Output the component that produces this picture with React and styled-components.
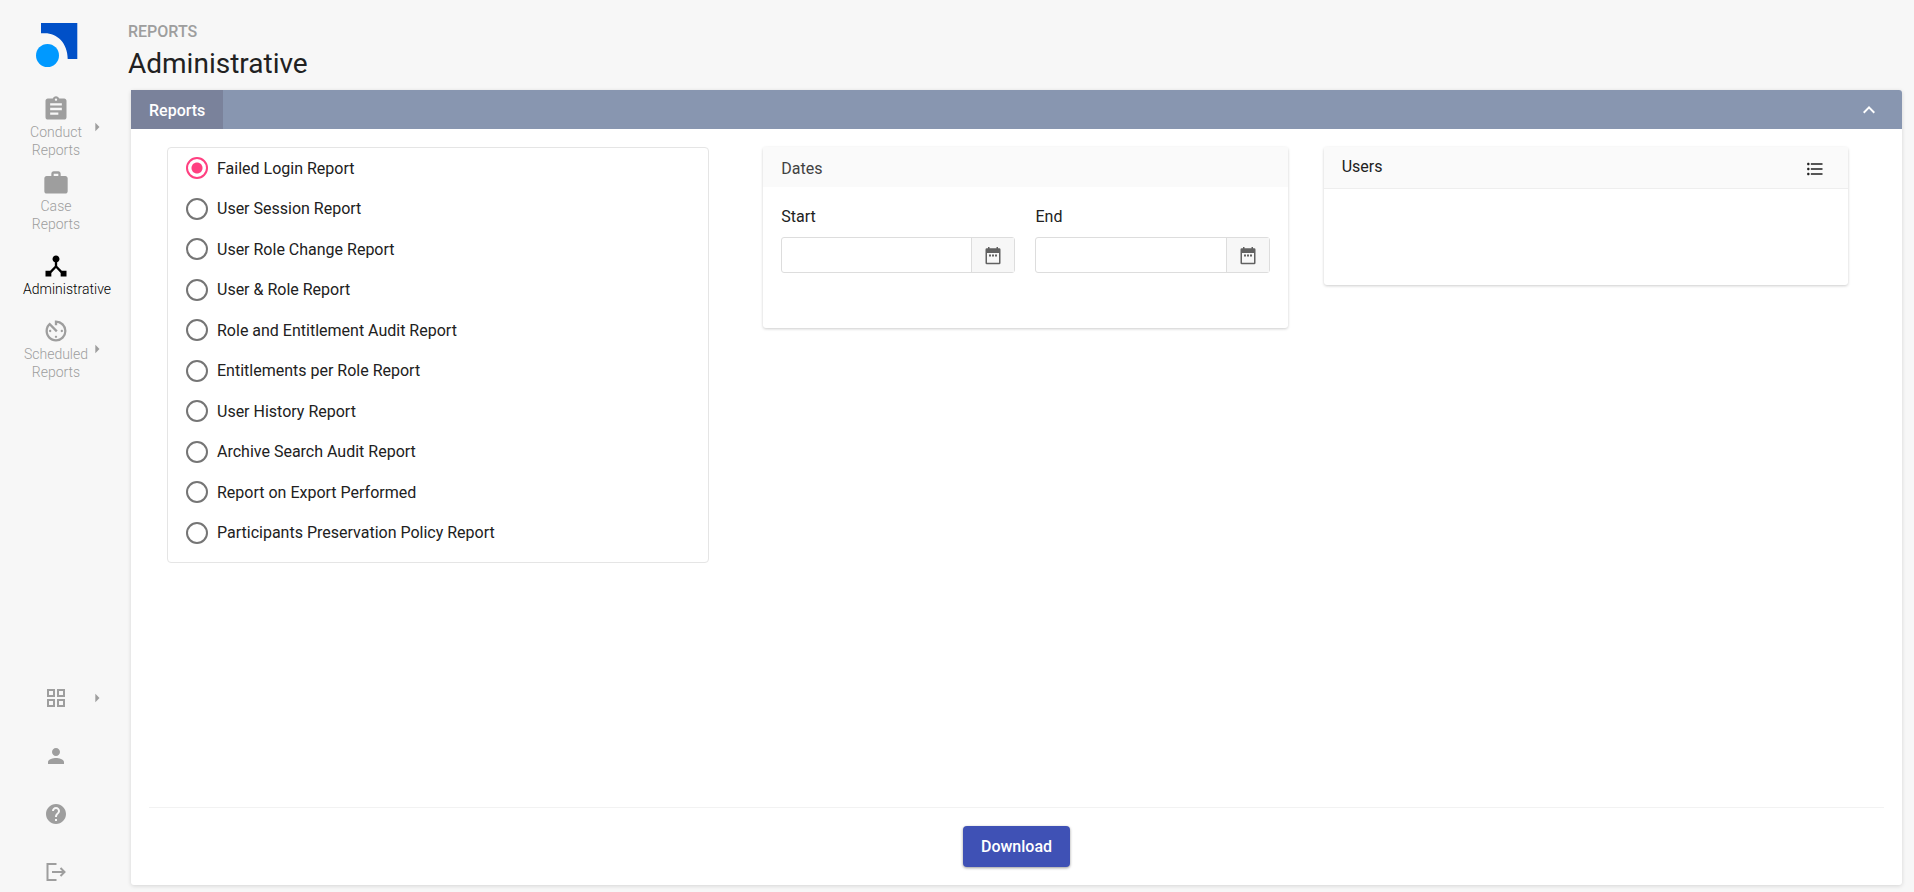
import React from 'react';
import styled, { createGlobalStyle, css } from 'styled-components';
import {
  MdAssignment,
  MdWork,
  MdDeviceHub,
  MdAvTimer,
  MdArrowRight,
  MdPerson,
  MdHelp,
  MdKeyboardArrowUp,
  MdFormatListBulleted,
} from 'react-icons/md';

const GlobalStyle = createGlobalStyle`
  * {
    box-sizing: border-box;
  }

  body {
    margin: 0;
    background: #f7f7f7;
    color: #212121;
    font-family: Roboto, "Liberation Sans", sans-serif;
    font-size: 16px;
    line-height: 24px;
  }

  button,
  input {
    font: inherit;
    color: inherit;
  }
`;

const Page = styled.div`
  display: flex;
  min-height: 100vh;
`;

const Sidebar = styled.nav`
  flex: none;
  width: 131px;
  display: flex;
  flex-direction: column;
  justify-content: space-between;
  padding: 23px 0 8px;
`;

const LogoLink = styled.a`
  display: block;
  height: 44px;
  margin: 0 0 28px 36px;

  svg {
    display: block;
  }
`;

const NavList = styled.ul`
  list-style: none;
  margin: 0;
  padding: 0;
  display: flex;
  flex-direction: column;
  gap: ${props => props.$gap};
`;

const NavLink = styled.a`
  display: flex;
  align-items: center;
  padding: ${props => props.$active ? '9px 0' : '0'};
  color: ${props => props.$active ? '#000' : '#9e9e9e'};
  text-decoration: none;
  font-size: 14px;
  font-weight: 300;
  line-height: 18px;

  svg {
    display: block;
  }
`;

const NavBody = styled.span`
  width: 66px;
  margin: 0 -2px 0 23px;
  display: flex;
  flex-direction: column;
  align-items: center;
`;

const NavLabel = styled.span`
  width: 100%;
  text-align: center;
`;

const Main = styled.main`
  flex: 1;
  min-width: 0;
  display: flex;
  flex-direction: column;
  padding: 20px 12px 7px 0;
`;

const PageHeader = styled.header`
  margin-left: -3px;
`;

const Section = styled.div`
  color: #9e9e9e;
  font-weight: 500;
  line-height: 24px;
`;

const Title = styled.h1`
  margin: 0;
  padding-bottom: 6px;
  font-size: 28px;
  font-weight: 400;
  line-height: 40px;
`;

const Panel = styled.section`
  flex: 1;
  display: flex;
  flex-direction: column;
  background: #fff;
  border-radius: 3px;
  box-shadow: 0 1px 4px rgba(0, 0, 0, .14);
`;

const PanelBar = styled.div`
  display: flex;
  justify-content: space-between;
  height: 39px;
  padding-right: 21px;
  background: #8896b0;
  border-radius: 3px 3px 0 0;
  color: #fff;
`;

const Tab = styled.button`
  border: 0;
  padding: 2px 18px 0;
  background: #7a829b;
  color: #fff;
  font-weight: 500;
`;

const IconButton = styled.button`
  display: flex;
  align-items: center;
  border: 0;
  padding: 0;
  background: none;
`;

const Columns = styled.div`
  flex: 1;
  display: grid;
  grid-template-columns: repeat(3, minmax(0, 1fr));
  align-items: start;
  padding: 18px 18px 0;
`;

const Column = styled.div`
  padding: ${props => props.$padding};
`;

const RadioBox = styled.fieldset`
  min-width: 0;
  margin: 0;
  border: 1px solid #e5e5e5;
  border-radius: 4px;
  padding: 0 18px 9px;
`;

const RadioList = styled.div`
  display: grid;
  grid-auto-rows: 1fr;
  min-height: 405px;
`;

const RadioRow = styled.label`
  display: flex;
  align-items: center;
  gap: 9px;
  line-height: 26px;
`;

const RadioText = styled.span`
  padding-top: 1px;
`;

const Radio = styled.input`
  appearance: none;
  flex: none;
  width: 22px;
  height: 22px;
  margin: 0;
  border: 2px solid #757575;
  border-radius: 50%;

  &:checked {
    border-color: #ff4081;
    background: radial-gradient(circle, #ff4081 5px, transparent 6px);
  }
`;

const Card = styled.section`
  min-height: ${props => props.$minHeight};
  background: #fff;
  border-radius: 3px;
  box-shadow: 0 1px 3px rgba(0, 0, 0, .2);
`;

const CardHeader = styled.header`
  display: flex;
  justify-content: space-between;
  align-items: center;
  height: 40px;
  padding: 3px 18px 0;
  background: #fafafa;
  color: #424242;

  ${props => props.$ruled && css`
    height: 42px;
    padding: 0 23px 2px 18px;
    border-bottom: 1px solid #eee;
    color: #212121;

    svg {
      display: block;
      margin-top: 4px;
    }
  `}
`;

const CardTitle = styled.h2`
  margin: 0;
  font-size: 16px;
  font-weight: 400;
`;

const DateFields = styled.div`
  display: grid;
  grid-template-columns: repeat(2, minmax(0, 1fr));
  gap: 20px;
  padding: 18px;
`;

const FieldLabel = styled.label`
  display: block;
  padding-bottom: 8px;
`;

const DateGroup = styled.div`
  display: flex;
  height: 36px;
  border: 1px solid #ddd;
  border-radius: 3px;
`;

const DateInput = styled.input`
  flex: 1;
  min-width: 0;
  border: 0;
  padding: 0 8px;
  background: none;
`;

const DateButton = styled.button`
  flex: none;
  width: 43px;
  display: flex;
  align-items: center;
  justify-content: center;
  border: 0;
  border-left: 1px solid #ddd;
  padding: 2px 0 0;
  background: #f7f7f7;
  color: #616161;
`;

const PanelFooter = styled.footer`
  display: flex;
  justify-content: center;
  margin: 0 18px;
  padding: 18px 0;
  border-top: 1px solid #f2f2f2;
`;

const DownloadButton = styled.button`
  height: 41px;
  padding: 0 18px;
  border: 0;
  border-radius: 4px;
  background: #3f51b5;
  box-shadow: 0 1px 3px rgba(0, 0, 0, .4);
  color: #fff;
  font-weight: 500;
`;

const Logo = () => (
  <svg width="42" height="44" viewBox="0 0 42 44" aria-hidden="true">
    <path d="M5 0H41.300V36H31.700C31.700 20 21 10.300 9 10.300H5Z" fill="#0050c8" />
    <circle cx="11.500" cy="32.500" r="11.500" fill="#0099ff" />
  </svg>
);

const GridIcon = () => (
  <svg width="24" height="24" viewBox="0 0 24 24" fill="none" stroke="currentColor" strokeWidth="2" aria-hidden="true">
    <path d="M4 4h6v6H4zM14 4h6v6h-6zM4 14h6v6H4zM14 14h6v6h-6z" />
  </svg>
);

const LogoutIcon = () => (
  <svg width="24" height="24" viewBox="0 0 24 24" fill="none" stroke="currentColor" strokeWidth="2" aria-hidden="true">
    <path d="M12.500 4H3.500v16h9M8 12h13M16.500 8l4 4-4 4" />
  </svg>
);

const CalendarIcon = () => (
  <svg width="16" height="18" viewBox="0 0 16 18" aria-hidden="true">
    <path
      fill="currentColor"
      fillRule="evenodd"
      d="M3 0h1.500v1.300h7V0H13v1.300h1.200a1.300 1.300 0 0 1 1.300 1.300v13.400a1.300 1.300 0 0 1-1.300 1.300H1.800a1.300 1.300 0 0 1-1.300-1.300V2.600a1.300 1.300 0 0 1 1.300-1.300H3zM2 6v9.800h12V6zM4 7.500h2v2H4zM7 7.500h2v2H7zM10 7.500h2v2h-2z"
    />
  </svg>
);

const mainLinks = [
  { label: 'Conduct Reports', icon: MdAssignment, menu: true },
  { label: 'Case Reports', icon: MdWork },
  { label: 'Administrative', icon: MdDeviceHub, active: true },
  { label: 'Scheduled Reports', icon: MdAvTimer, menu: true },
];

const toolLinks = [
  { name: 'Applications', icon: GridIcon, menu: true },
  { name: 'Profile', icon: MdPerson },
  { name: 'Help', icon: MdHelp },
  { name: 'Log out', icon: LogoutIcon },
];

const reports = [
  'Failed Login Report',
  'User Session Report',
  'User Role Change Report',
  'User & Role Report',
  'Role and Entitlement Audit Report',
  'Entitlements per Role Report',
  'User History Report',
  'Archive Search Audit Report',
  'Report on Export Performed',
  'Participants Preservation Policy Report',
];

function NavItem({ label, name, icon: Icon, menu, active }) {
  return (
    <li>
      <NavLink href="#" $active={active} aria-label={name}>
        <NavBody>
          <Icon size={label ? 28 : 24} />
          {label && <NavLabel>{label}</NavLabel>}
        </NavBody>
        {menu && <MdArrowRight size={20} />}
      </NavLink>
    </li>
  );
}

function DateField({ id, label }) {
  return (
    <div>
      <FieldLabel htmlFor={id}>{label}</FieldLabel>
      <DateGroup>
        <DateInput id={id} type="text" />
        <DateButton type="button" aria-label={`Pick ${label} date`}>
          <CalendarIcon />
        </DateButton>
      </DateGroup>
    </div>
  );
}

function App() {
  const [report, setReport] = React.useState(reports[0]);

  return (
    <>
      <GlobalStyle />
      <Page>
        <Sidebar>
          <div>
            <LogoLink href="#" aria-label="Home"><Logo /></LogoLink>
            <NavList $gap="10px">
              {mainLinks.map(link => <NavItem key={link.label} {...link} />)}
            </NavList>
          </div>
          <NavList $gap="34px">
            {toolLinks.map(link => <NavItem key={link.name} {...link} />)}
          </NavList>
        </Sidebar>
        <Main>
          <PageHeader>
            <Section>REPORTS</Section>
            <Title>Administrative</Title>
          </PageHeader>
          <Panel>
            <PanelBar>
              <Tab type="button">Reports</Tab>
              <IconButton type="button" aria-label="Collapse">
                <MdKeyboardArrowUp size={24} color="#fff" />
              </IconButton>
            </PanelBar>
            <Columns>
              <Column $padding="0 18px">
                <RadioBox aria-label="Report">
                  <RadioList>
                    {reports.map(name => (
                      <RadioRow key={name}>
                        <Radio
                          type="radio"
                          name="report"
                          value={name}
                          checked={report === name}
                          onChange={() => setReport(name)}
                        />
                        <RadioText>{name}</RadioText>
                      </RadioRow>
                    ))}
                  </RadioList>
                </RadioBox>
              </Column>
              <Column $padding="0 18px 0 36px">
                <Card $minHeight="181px">
                  <CardHeader>
                    <CardTitle>Dates</CardTitle>
                  </CardHeader>
                  <DateFields>
                    <DateField id="start" label="Start" />
                    <DateField id="end" label="End" />
                  </DateFields>
                </Card>
              </Column>
              <Column $padding="0 36px 0 18px">
                <Card $minHeight="138px">
                  <CardHeader $ruled>
                    <CardTitle>Users</CardTitle>
                    <IconButton type="button" aria-label="Select users">
                      <MdFormatListBulleted size={20} />
                    </IconButton>
                  </CardHeader>
                </Card>
              </Column>
            </Columns>
            <PanelFooter>
              <DownloadButton type="button">Download</DownloadButton>
            </PanelFooter>
          </Panel>
        </Main>
      </Page>
    </>
  );
}

export default App;
